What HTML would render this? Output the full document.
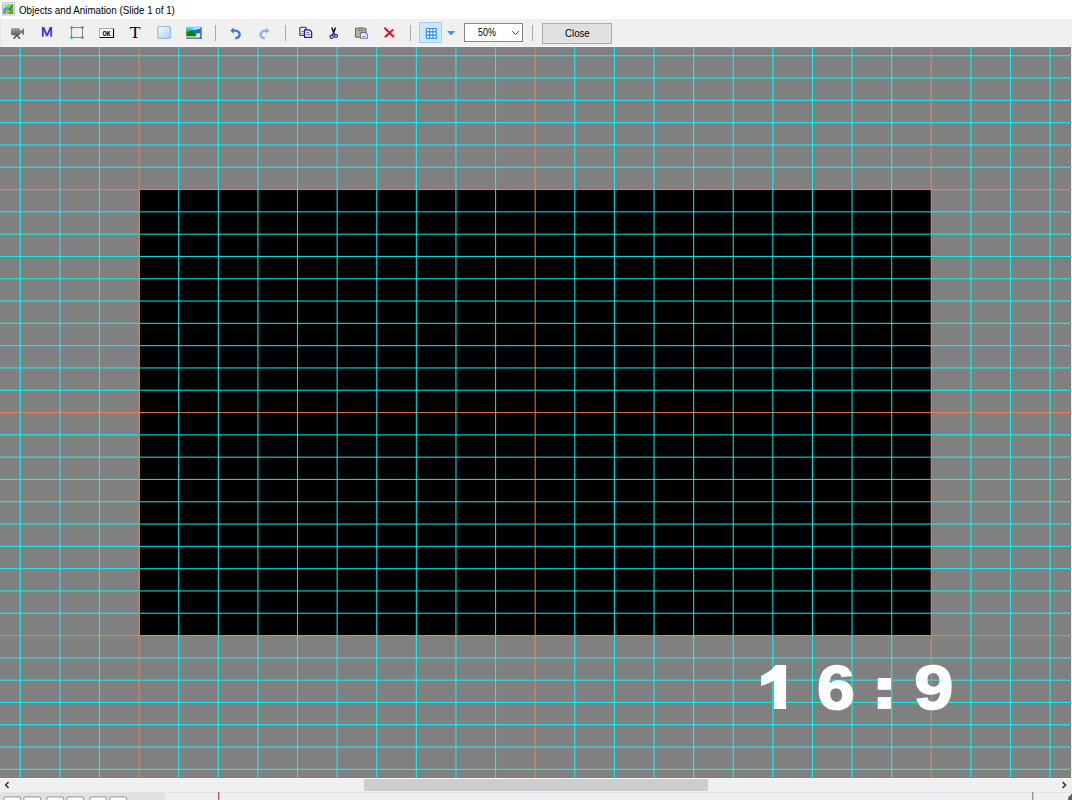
<!DOCTYPE html>
<html><head><meta charset="utf-8">
<style>
*{margin:0;padding:0;box-sizing:border-box}
html,body{width:1072px;height:800px;overflow:hidden;background:#f0f0f0;font-family:"Liberation Sans",sans-serif}
.abs{position:absolute}
#title{position:absolute;left:0;top:0;width:1072px;height:19px;background:#fff}
#title .t{position:absolute;left:19px;top:4.9px;font-size:10.4px;line-height:12px;color:#000;white-space:nowrap;transform:scaleX(0.94);transform-origin:0 0}
#toolbar{position:absolute;left:0;top:19px;width:1072px;height:28px;background:#f0f0f0}
#canvas{position:absolute;left:0;top:47px;width:1071px;height:731px;background:#808080;overflow:hidden}
#combo{position:absolute;left:464px;top:23px;width:59px;height:19px;background:#fff;border:1px solid #858585}
#combo .v{position:absolute;left:12.5px;top:2.6px;font-size:10.4px;line-height:11px;color:#000;transform:scaleX(0.86);transform-origin:0 0}
#close{position:absolute;left:542px;top:23px;width:70px;height:21px;background:#e1e1e1;border:1px solid #adadad}
#close .v{position:absolute;left:21.8px;top:3.6px;font-size:10.4px;line-height:11px;color:#000;transform:scaleX(0.93);transform-origin:0 0}
#gridbtn{position:absolute;left:419px;top:22px;width:23px;height:21px;background:#cce8ff;border:1px solid #99d1ff}
#bottom{position:absolute;left:0;top:778px;width:1072px;height:22px;background:#f0f0f0}
</style></head><body>
<div id="title"><div class="t">Objects and Animation (Slide 1 of 1)</div></div>
<div id="toolbar"></div>
<div id="gridbtn"></div>
<div id="combo"><div class="v">50%</div></div>
<div id="close"><div class="v">Close</div></div>
<svg class="abs" style="left:0;top:0" width="1072" height="47">
<!-- title icon -->
<defs>
<linearGradient id="tig" x1="0" y1="0" x2="1" y2="1"><stop offset="0" stop-color="#c8f8a0"/><stop offset="0.6" stop-color="#60c850"/><stop offset="1" stop-color="#30a030"/></linearGradient>
<linearGradient id="camg" x1="0" y1="0" x2="0" y2="1"><stop offset="0" stop-color="#a4a4a4"/><stop offset="1" stop-color="#606060"/></linearGradient>
<linearGradient id="rectg" x1="0" y1="0" x2="1" y2="1"><stop offset="0" stop-color="#f4faff"/><stop offset="1" stop-color="#a8d4ff"/></linearGradient>
<linearGradient id="skyg" x1="0" y1="0" x2="0" y2="1"><stop offset="0" stop-color="#b8e4ff"/><stop offset="1" stop-color="#50c8f8"/></linearGradient>
</defs>
<rect x="2.5" y="2.7" width="12" height="12.4" fill="#f4f4fa" stroke="#c4c4d8" stroke-width="1"/>
<rect x="3.3" y="4" width="10" height="10" fill="url(#tig)"/>
<path d="M3.3,14 L3.3,9 C5,7.6 7,7.2 8.6,7.6 L8.8,9.4 C7,9.4 5.6,10.5 5.6,14 Z" fill="#3aa0e0"/>
<path d="M5.6,14 C5.6,10.5 7,9.4 8.8,9.4 L9,10.2 C7.6,10.6 6.8,12 6.8,14 Z" fill="#80d8f0"/>
<path d="M5.8,12.5 C6,10.8 7,10 8.2,9.6 L9.6,10.6 C9.4,12 8.6,13.5 7,14 L6,14 Z" fill="#f0b418"/>
<path d="M8.4,9.8 L12.6,5 L13.3,5.6 L9.4,10.6 Z" fill="#6a3c10"/>
<!-- camera -->
<rect x="11" y="28" width="9.2" height="7.2" rx="1.8" fill="url(#camg)"/>
<path d="M19.8,30.4 L21.6,30.6 L24,28 L24,35.6 L21.6,33.2 L19.8,33.4 Z" fill="#7a7a7a"/>
<path d="M16.8,35 L13.6,38.8 M16.8,35 L20,38.8" stroke="#404040" stroke-width="1.3" fill="none"/>
<!-- M -->
<path d="M41.9,27 L44.2,27 L47,33.4 L49.8,27 L52.1,27 L52.1,36.8 L50.3,36.8 L50.3,30.4 L47.8,36.3 L46.2,36.3 L43.7,30.4 L43.7,36.8 L41.9,36.8 Z" fill="#3a3ae2"/>
<!-- frame -->
<rect x="71.5" y="27.5" width="11" height="10" fill="none" stroke="#8a8a8a" stroke-width="1"/>
<circle cx="71.6" cy="27.6" r="1.4" fill="#28c028"/><circle cx="82.4" cy="27.6" r="1.4" fill="#28c028"/>
<circle cx="71.6" cy="37.6" r="1.4" fill="#28c028"/><circle cx="82.4" cy="37.6" r="1.4" fill="#28c028"/>
<!-- OK button -->
<rect x="99.5" y="28.5" width="14" height="9" fill="#fafafa" stroke="#a8a8a8" stroke-width="1"/>
<path d="M113.5,29 L113.5,37.5 L100,37.5" stroke="#000" stroke-width="1.2" fill="none"/>
<text x="0" y="0" text-anchor="middle" font-family="Liberation Sans" font-weight="bold" font-size="8.2" fill="#000" stroke="#000" stroke-width="0.25" transform="translate(106.6,35.5) scale(0.66,0.95)">OK</text>
<!-- T -->
<text x="135.2" y="38.2" text-anchor="middle" font-family="Liberation Serif" font-size="17.6" fill="#000">T</text>
<!-- rect -->
<rect x="157.9" y="26.5" width="12.6" height="11.8" rx="1.2" fill="url(#rectg)" stroke="#8cbce8" stroke-width="1.2"/>
<!-- image -->
<rect x="186.3" y="25.9" width="14" height="12" fill="#c8ecff"/>
<rect x="186.3" y="27.4" width="14" height="3" fill="#48c8f4"/>
<path d="M193,28 C195,28.5 197,28.2 200.2,27.5 L200.2,30 C197,30.5 195,30 193,29.5 Z" fill="#c8f0f0"/>
<path d="M191,30.2 C194,30 197,29.5 200.2,28.8 L200.2,34.2 L191,34.2 Z" fill="#0a72e4"/>
<path d="M186.3,33.5 C190,33.8 195,33.5 200.2,33.2 L200.2,37.7 L186.3,37.7 Z" fill="#e4f4a4"/>
<path d="M186.3,29.8 C188.5,29.5 190.5,30.2 192,31.2 C193.5,32.2 195,33.2 196.4,34.2 C196.6,35.2 196,36 195,36.2 L186.3,36.2 Z" fill="#0e7e0e"/>
<path d="M186.3,29.8 C188,29.6 189.5,30 190.5,30.6 L187.5,32.5 L186.3,32.5 Z" fill="#3cb43c"/>
<rect x="186.3" y="37.6" width="15.4" height="1.1" fill="#2a4aa8"/>
<rect x="200.3" y="27.2" width="1.3" height="11.5" fill="#2a4cb0"/>
<!-- undo -->
<path d="M232.8,30.6 L235,30.6 C238.5,30.6 239.6,33 239.6,34.5 C239.6,36.5 237.8,38 235.2,38.4" stroke="#3a78d8" stroke-width="2.4" fill="none"/>
<path d="M230.3,30.6 L233.8,27.6 L233.8,33.8 Z" fill="#3a78d8"/>
<!-- redo -->
<path d="M267,30.8 L265,30.8 C262,30.8 260.6,33 260.6,34.8 C260.6,36.6 262.4,38 264.8,38.4" stroke="#8cb4e6" stroke-width="2.4" fill="none"/>
<path d="M269.5,30.8 L266.2,27.8 L266.2,33.8 Z" fill="#8cb4e6"/>
<!-- copy -->
<rect x="299.8" y="27.3" width="6.5" height="8.2" rx="1" fill="#e8e8e8" stroke="#383838" stroke-width="1.1"/>
<path d="M301.5,31.5 h3 M301.5,33.5 h3" stroke="#606060" stroke-width="0.8"/>
<path d="M304.6,29.8 L309.5,29.8 L311.6,31.8 L311.6,37.3 L304.6,37.3 Z" fill="#f0f0e8" stroke="#2020a0" stroke-width="1.3"/>
<path d="M306.5,32.5 h2.5 M306.5,34.5 h3.5" stroke="#707060" stroke-width="1"/>
<!-- scissors -->
<path d="M331.9,27.6 L333.6,32.8 L335.5,27.6" stroke="#111" stroke-width="1.5" fill="none"/>
<path d="M333.6,32.6 L332,35.5 M333.6,32.6 L335.2,35" stroke="#2a2a98" stroke-width="1.2"/>
<circle cx="331.6" cy="36.7" r="1.6" fill="none" stroke="#2a2a98" stroke-width="1.2"/>
<circle cx="336" cy="35.9" r="1.5" fill="none" stroke="#2a2a98" stroke-width="1.2"/>
<!-- paste -->
<rect x="355.5" y="28.2" width="10.5" height="9" rx="0.8" fill="#b8b890" stroke="#68685a" stroke-width="1.1"/>
<rect x="358.5" y="27.3" width="4.5" height="2" fill="#8a8a70"/>
<path d="M357.5,30.5 h6.5" stroke="#7878a0" stroke-width="1"/>
<path d="M360.5,32.6 L365.3,32.6 L367.5,34.6 L367.5,38.2 L360.5,38.2 Z" fill="#f4f4f4" stroke="#7070d0" stroke-width="1.1"/>
<path d="M362.5,36.5 h3" stroke="#808070" stroke-width="1"/>
<!-- delete -->
<path d="M384.4,27.8 L393.8,37 M393.2,29.4 L384.8,37.2" stroke="#e0102a" stroke-width="2" fill="none"/>
<!-- grid button icon -->
<rect x="425.8" y="28" width="11" height="11" rx="0.8" fill="#3592f0"/>
<g fill="#fff">
<rect x="427" y="29.1" width="2" height="2"/><rect x="430.3" y="29.1" width="2" height="2"/><rect x="433.5" y="29.1" width="2" height="2"/>
<rect x="427" y="32.4" width="2" height="2"/><rect x="430.3" y="32.4" width="2" height="2"/><rect x="433.5" y="32.4" width="2" height="2"/>
<rect x="427" y="35.8" width="2" height="2"/><rect x="430.3" y="35.8" width="2" height="2"/><rect x="433.5" y="35.8" width="2" height="2"/>
</g>
<path d="M447,31 L455.3,31 L451.15,35.5 Z" fill="#3a96f0"/>
<!-- combo chevron -->
<path d="M512.3,31.2 L515.6,34.5 L518.9,31.2" stroke="#404040" stroke-width="1" fill="none"/>

<!-- separators -->
<rect x="0" y="46" width="1072" height="1" fill="#f8f8f8"/>
<rect x="0" y="19" width="1" height="27" fill="#e6e6e6"/>
<rect x="215" y="25" width="1" height="16" fill="#ababab"/>
<rect x="285" y="25" width="1" height="16" fill="#ababab"/>
<rect x="410" y="25" width="1" height="16" fill="#ababab"/>
<rect x="532" y="25" width="1" height="16" fill="#ababab"/>
</svg>
<div id="canvas">
<svg width="1071" height="731" style="position:absolute;left:0;top:0">
<rect x="140" y="143" width="791" height="445" fill="#000"/>
<rect x="0" y="8.20" width="1071" height="1.1" fill="#00FFFF" fill-opacity="0.85"/>
<rect x="0" y="30.50" width="1071" height="1.1" fill="#00FFFF" fill-opacity="0.85"/>
<rect x="0" y="52.80" width="1071" height="1.1" fill="#00FFFF" fill-opacity="0.85"/>
<rect x="0" y="75.10" width="1071" height="1.1" fill="#00FFFF" fill-opacity="0.85"/>
<rect x="0" y="97.40" width="1071" height="1.1" fill="#00FFFF" fill-opacity="0.85"/>
<rect x="0" y="119.70" width="1071" height="1.1" fill="#00FFFF" fill-opacity="0.85"/>
<rect x="0" y="142.00" width="1071" height="1.1" fill="#FF8040" fill-opacity="0.85"/>
<rect x="0" y="164.30" width="1071" height="1.1" fill="#00FFFF" fill-opacity="0.85"/>
<rect x="0" y="186.60" width="1071" height="1.1" fill="#00FFFF" fill-opacity="0.85"/>
<rect x="0" y="208.90" width="1071" height="1.1" fill="#00FFFF" fill-opacity="0.85"/>
<rect x="0" y="231.20" width="1071" height="1.1" fill="#00FFFF" fill-opacity="0.85"/>
<rect x="0" y="253.50" width="1071" height="1.1" fill="#00FFFF" fill-opacity="0.85"/>
<rect x="0" y="275.80" width="1071" height="1.1" fill="#00FFFF" fill-opacity="0.85"/>
<rect x="0" y="298.10" width="1071" height="1.1" fill="#00FFFF" fill-opacity="0.85"/>
<rect x="0" y="320.40" width="1071" height="1.1" fill="#00FFFF" fill-opacity="0.85"/>
<rect x="0" y="342.70" width="1071" height="1.1" fill="#00FFFF" fill-opacity="0.85"/>
<rect x="0" y="365.00" width="1071" height="1.1" fill="#FF8040" fill-opacity="0.85"/>
<rect x="0" y="387.30" width="1071" height="1.1" fill="#00FFFF" fill-opacity="0.85"/>
<rect x="0" y="409.60" width="1071" height="1.1" fill="#00FFFF" fill-opacity="0.85"/>
<rect x="0" y="431.90" width="1071" height="1.1" fill="#00FFFF" fill-opacity="0.85"/>
<rect x="0" y="454.20" width="1071" height="1.1" fill="#00FFFF" fill-opacity="0.85"/>
<rect x="0" y="476.50" width="1071" height="1.1" fill="#00FFFF" fill-opacity="0.85"/>
<rect x="0" y="498.80" width="1071" height="1.1" fill="#00FFFF" fill-opacity="0.85"/>
<rect x="0" y="521.10" width="1071" height="1.1" fill="#00FFFF" fill-opacity="0.85"/>
<rect x="0" y="543.40" width="1071" height="1.1" fill="#00FFFF" fill-opacity="0.85"/>
<rect x="0" y="565.70" width="1071" height="1.1" fill="#00FFFF" fill-opacity="0.85"/>
<rect x="0" y="588.00" width="1071" height="1.1" fill="#FF8040" fill-opacity="0.85"/>
<rect x="0" y="610.30" width="1071" height="1.1" fill="#00FFFF" fill-opacity="0.85"/>
<rect x="0" y="632.60" width="1071" height="1.1" fill="#00FFFF" fill-opacity="0.85"/>
<rect x="0" y="654.90" width="1071" height="1.1" fill="#00FFFF" fill-opacity="0.85"/>
<rect x="0" y="677.20" width="1071" height="1.1" fill="#00FFFF" fill-opacity="0.85"/>
<rect x="0" y="699.50" width="1071" height="1.1" fill="#00FFFF" fill-opacity="0.85"/>
<rect x="0" y="721.80" width="1071" height="1.1" fill="#00FFFF" fill-opacity="0.85"/>
<rect x="19.70" y="0" width="1.1" height="731" fill="#00FFFF" fill-opacity="0.85"/>
<rect x="59.31" y="0" width="1.1" height="731" fill="#00FFFF" fill-opacity="0.85"/>
<rect x="98.92" y="0" width="1.1" height="731" fill="#00FFFF" fill-opacity="0.85"/>
<rect x="138.53" y="0" width="1.1" height="731" fill="#FF8040" fill-opacity="0.85"/>
<rect x="178.14" y="0" width="1.1" height="731" fill="#00FFFF" fill-opacity="0.85"/>
<rect x="217.75" y="0" width="1.1" height="731" fill="#00FFFF" fill-opacity="0.85"/>
<rect x="257.36" y="0" width="1.1" height="731" fill="#00FFFF" fill-opacity="0.85"/>
<rect x="296.97" y="0" width="1.1" height="731" fill="#00FFFF" fill-opacity="0.85"/>
<rect x="336.58" y="0" width="1.1" height="731" fill="#00FFFF" fill-opacity="0.85"/>
<rect x="376.19" y="0" width="1.1" height="731" fill="#00FFFF" fill-opacity="0.85"/>
<rect x="415.80" y="0" width="1.1" height="731" fill="#00FFFF" fill-opacity="0.85"/>
<rect x="455.41" y="0" width="1.1" height="731" fill="#00FFFF" fill-opacity="0.85"/>
<rect x="495.02" y="0" width="1.1" height="731" fill="#00FFFF" fill-opacity="0.85"/>
<rect x="534.63" y="0" width="1.1" height="731" fill="#FF8040" fill-opacity="0.85"/>
<rect x="574.24" y="0" width="1.1" height="731" fill="#00FFFF" fill-opacity="0.85"/>
<rect x="613.85" y="0" width="1.1" height="731" fill="#00FFFF" fill-opacity="0.85"/>
<rect x="653.46" y="0" width="1.1" height="731" fill="#00FFFF" fill-opacity="0.85"/>
<rect x="693.07" y="0" width="1.1" height="731" fill="#00FFFF" fill-opacity="0.85"/>
<rect x="732.68" y="0" width="1.1" height="731" fill="#00FFFF" fill-opacity="0.85"/>
<rect x="772.29" y="0" width="1.1" height="731" fill="#00FFFF" fill-opacity="0.85"/>
<rect x="811.90" y="0" width="1.1" height="731" fill="#00FFFF" fill-opacity="0.85"/>
<rect x="851.51" y="0" width="1.1" height="731" fill="#00FFFF" fill-opacity="0.85"/>
<rect x="891.12" y="0" width="1.1" height="731" fill="#00FFFF" fill-opacity="0.85"/>
<rect x="930.73" y="0" width="1.1" height="731" fill="#FF8040" fill-opacity="0.85"/>
<rect x="970.34" y="0" width="1.1" height="731" fill="#00FFFF" fill-opacity="0.85"/>
<rect x="1009.95" y="0" width="1.1" height="731" fill="#00FFFF" fill-opacity="0.85"/>
<rect x="1049.56" y="0" width="1.1" height="731" fill="#00FFFF" fill-opacity="0.85"/>
<g fill="#fff">
<path d="M786.1,618.1 L775.6,618.1 C773,622 768,626 761.1,628.9 L761.1,639 C766,637.5 770.5,635.8 773.9,633.6 L773.9,662 L786.1,662 Z"/>
<rect x="877.7" y="631" width="13.3" height="11.8"/>
<rect x="877.7" y="650.1" width="13.3" height="11.8"/>
<text transform="translate(817,662.3) scale(1.097,1.03)" x="0" y="0" font-family="Liberation Sans" font-weight="bold" font-size="62" stroke="#fff" stroke-width="1.6">6</text>
<text transform="translate(914.27,661.8) scale(1.134,1.023)" x="0" y="0" font-family="Liberation Sans" font-weight="bold" font-size="62" stroke="#fff" stroke-width="1.6">9</text>
</g>
</svg>
</div>
<div id="bottom">
<svg width="1072" height="22" style="position:absolute;left:0;top:0">
<rect x="0" y="0" width="1072" height="1" fill="#fdfdfd"/>
<rect x="364" y="1" width="344" height="12" fill="#cdcdcd"/>
<path d="M8.6,4.2 L5.6,7 L8.6,9.8" stroke="#3c3c3c" stroke-width="1.6" fill="none"/>
<path d="M1062.6,4.2 L1065.6,7 L1062.6,9.8" stroke="#3c3c3c" stroke-width="1.6" fill="none"/>
<rect x="0" y="14" width="1072" height="1" fill="#dce4f2"/>
<rect x="0" y="15" width="165" height="7" fill="#e2e2e2"/>
<rect x="165" y="15" width="907" height="7" fill="#f0f0f0"/>
<g fill="#fff" stroke="#a4a4a4" stroke-width="1.2">
<rect x="3.8" y="18.8" width="16.8" height="8" rx="2"/>
<rect x="23.8" y="18.8" width="16.8" height="8" rx="2"/>
<rect x="46.8" y="18.8" width="16.8" height="8" rx="2"/>
<rect x="66.8" y="18.8" width="16.8" height="8" rx="2"/>
<rect x="89.8" y="18.8" width="16.8" height="8" rx="2"/>
<rect x="109.8" y="18.8" width="16.8" height="8" rx="2"/>
</g>
<rect x="218" y="14" width="1.3" height="8" fill="#d04848"/>
<rect x="1032.3" y="14" width="1" height="8" fill="#707070"/>
<path d="M1072,15.5 L1068.5,19 L1067.8,22 L1072,22 Z" fill="#606060"/>
</svg>
</div>
</body></html>
